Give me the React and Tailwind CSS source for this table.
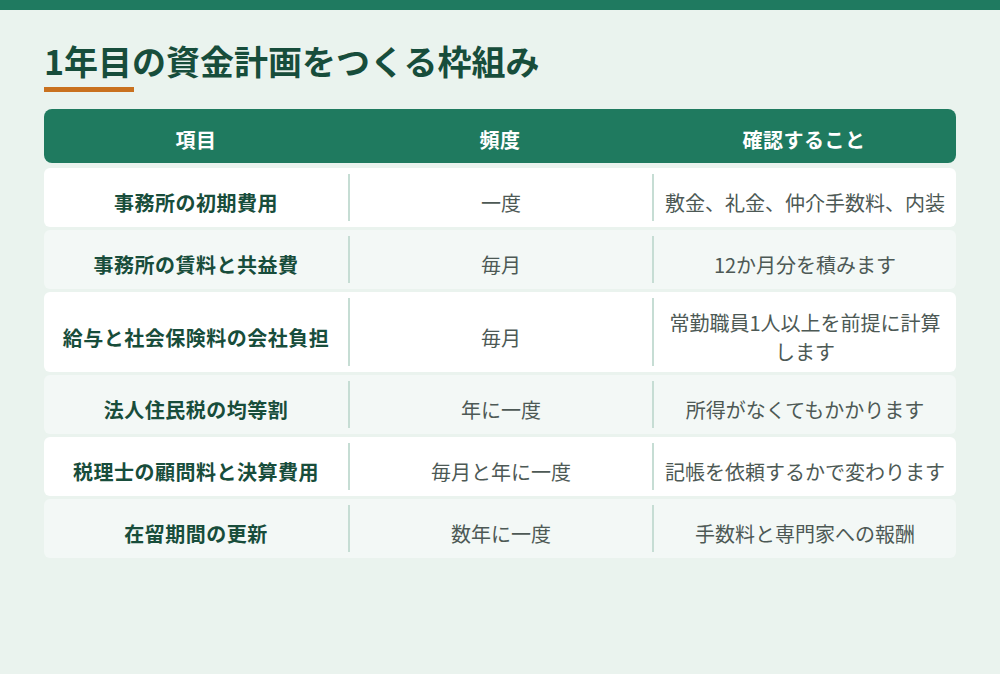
import React from 'react';

const rows = [
  { item: '事務所の初期費用', freq: '一度', check: '敷金、礼金、仲介手数料、内装' },
  { item: '事務所の賃料と共益費', freq: '毎月', check: '12か月分を積みます' },
  { item: '給与と社会保険料の会社負担', freq: '毎月', check: '常勤職員1人以上を前提に計算します' },
  { item: '法人住民税の均等割', freq: '年に一度', check: '所得がなくてもかかります' },
  { item: '税理士の顧問料と決算費用', freq: '毎月と年に一度', check: '記帳を依頼するかで変わります' },
  { item: '在留期間の更新', freq: '数年に一度', check: '手数料と専門家への報酬' },
];

function Cell({ first, children, className }) {
  return (
    <div className="flex py-[6px]">
      <div
        className={`flex flex-1 items-center justify-center px-[10px] pt-[10px] text-center ${
          first ? '' : 'border-l-2 border-[#c6ddd4]'
        } ${className}`}
      >
        <span>{children}</span>
      </div>
    </div>
  );
}

export default function App() {
  return (
    <div
      className="min-h-[674px] w-full bg-[#eaf3ee]"
      style={{ fontFamily: '"Noto Sans CJK JP", "Noto Sans", sans-serif' }}
    >
      {/* top bar */}
      <div className="h-[10px] bg-[#1f7a60]" />

      <div className="px-[44px] pt-[27px]">
        <h1 className="text-[34px] font-bold leading-[48px] text-[#174d3b]">
          1年目の資金計画をつくる枠組み
        </h1>
        <div className="mt-[2px] h-[5px] w-[90px] bg-[#c9711f]" />

        {/* table header */}
        <div className="mt-[17px] grid h-[54px] grid-cols-3 rounded-[8px] bg-[#1f7a5f] pt-[8px] text-[20px] font-bold tracking-[0.5px] text-white">
          <div className="flex items-center justify-center">項目</div>
          <div className="flex items-center justify-center">頻度</div>
          <div className="flex items-center justify-center">確認すること</div>
        </div>

        {/* rows */}
        <div className="mt-[5px] flex flex-col gap-[3px]">
          {rows.map((r, i) => (
            <div
              key={i}
              className={`grid min-h-[59px] grid-cols-3 rounded-[6px] text-[20px] leading-[29px] ${
                i % 2 === 0 ? 'bg-white' : 'bg-[#f3f8f6]'
              }`}
            >
              <Cell first className="font-bold tracking-[0.5px] text-[#184d3b]">
                {r.item}
              </Cell>
              <Cell className="text-[#4d5955]">{r.freq}</Cell>
              <Cell className="text-[#4d5955]">{r.check}</Cell>
            </div>
          ))}
        </div>
      </div>
    </div>
  );
}
